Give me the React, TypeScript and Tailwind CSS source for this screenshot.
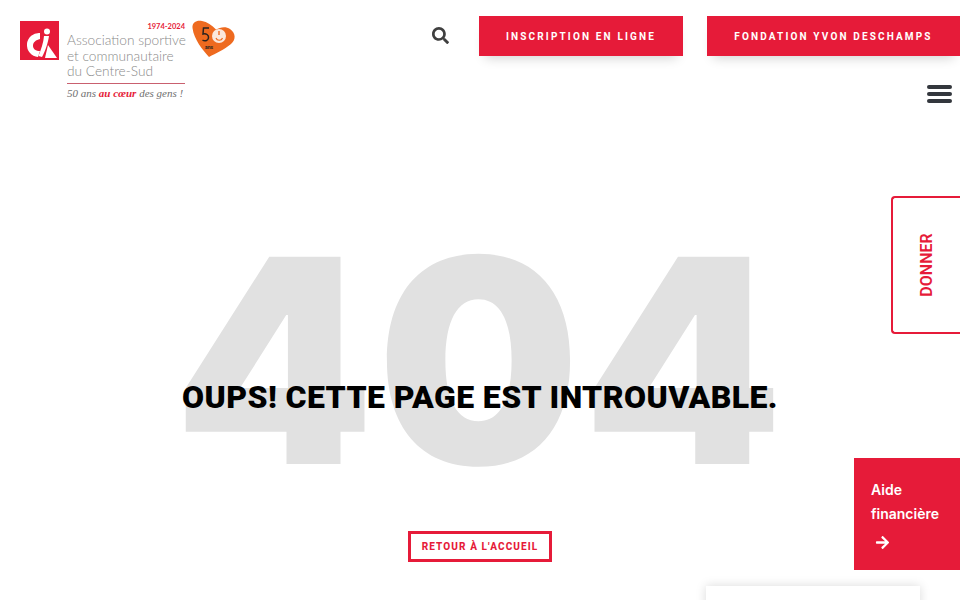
import { FaSearch, FaArrowRight } from "react-icons/fa"

const Logo = () => {
    return (
        <div className="flex items-start gap-2 pt-[21px] pl-5 font-['Lato',sans-serif]">
            <svg width="39" height="39" viewBox="0 0 39 39" className="shrink-0">
                <rect width="39" height="39" fill="#e61b39" />
                <path d="M20 12 A12 12 0 1 0 18 36 L20 30 C16 30 13 28 13 25 C13 21 16 19 20 18 Z" fill="#fff" />
                <circle cx="27" cy="10.5" r="3" fill="#fff" />
                <path d="M24 15 L29 15 C28 22 25 31 22 36 L18.5 35 C21 28 23.5 22 24 15 Z" fill="#fff" />
                <path d="M28 24 L37 37 L25 37 Z" fill="#fff" />
            </svg>
            <div className="w-[118px]">
                <p className="text-right text-[7.5px] leading-[12px] font-bold text-[#e61b39]">1974-2024</p>
                <p className="text-[13.7px] leading-[15.5px] font-light text-[#8a8a8a] whitespace-nowrap -mt-[1px]">
                    Association sportive
                    <br />
                    et communautaire
                    <br />
                    du Centre-Sud
                </p>
                <div className="h-px bg-[#c9606f] mt-[4px]"></div>
                <p className="font-['Liberation_Serif',serif] italic text-[11px] leading-[12px] mt-[3px] text-[#6f6f6f] whitespace-nowrap">
                    50 ans <b className="text-[#e61b39]">au cœur</b> des gens !
                </p>
            </div>
            <svg width="44" height="38" viewBox="0 0 44 38" className="shrink-0 -ml-[1px] -mt-[1px]">
                <path d="M17 37 C11 30 2 20 0.5 8 C0 2 5 0 10 1 C15 2 20 5 24 9.5 C28 7 34 6 38 9 C44 13 44 20 39 24 C32 30 24 33 17 37 Z" fill="#ee6a1f" />
                <path d="M17 8 H11.5 L11 14 C14 13 17 15 16.5 18 C16 21 12.5 21.5 10.5 20" fill="none" stroke="#2a2320" strokeWidth="1.5" />
                <circle cx="27" cy="16" r="7" fill="#fbe8dc" />
                <path d="M24 18 C25 21 29.5 21 30.5 18" fill="none" stroke="#ee6a1f" strokeWidth="1.2" />
                <path d="M27 11 V15" stroke="#ee6a1f" strokeWidth="1.4" />
                <text x="17" y="29" textAnchor="middle" fontSize="5" fontWeight="700" fill="#2a2320" fontFamily="Roboto, sans-serif">ans</text>
            </svg>
        </div>
    )
}

const HeaderButton = ({ label, className }: { label: string; className: string }) => {
    return (
        <a className={`flex h-10 items-center justify-center bg-[#e61b39] text-[10px] font-bold tracking-[2.15px] text-white shadow-[0_8px_12px_-6px_rgba(0,0,0,0.18)] ${className}`}>
            {label}
        </a>
    )
}

const Header = () => {
    return (
        <header className="flex justify-between">
            <Logo />
            <div className="flex flex-col items-end pt-4">
                <div className="flex items-center">
                    <FaSearch className="size-[17px] text-[#3f3f3f] mr-[30px] -mt-[1px]" />
                    <HeaderButton label="INSCRIPTION EN LIGNE" className="w-[204px] mr-6" />
                    <HeaderButton label="FONDATION YVON DESCHAMPS" className="w-[253px]" />
                </div>
                <div className="flex flex-col gap-[3px] w-[25px] mt-[29px] mr-2">
                    <span className="h-[4px] rounded-[2px] bg-[#33373d]"></span>
                    <span className="h-[4px] rounded-[2px] bg-[#33373d]"></span>
                    <span className="h-[4px] rounded-[2px] bg-[#33373d]"></span>
                </div>
            </div>
        </header>
    )
}

export default function App() {
    return (
        <div className="relative h-[600px] w-[960px] overflow-hidden bg-white font-['Roboto',sans-serif]">
            <Header />
            <main className="flex flex-col items-center mt-[127px]">
                <div className="grid place-items-center">
                    <div className="col-start-1 row-start-1 font-['Inter',sans-serif] font-black text-[285px] leading-[256px] tracking-[3px] text-[#e1e1e1] mt-[3px]">
                        404
                    </div>
                    <h1 className="col-start-1 row-start-1 self-end mb-[73px] text-[32px] leading-[38px] font-black tracking-[0.4px] text-black whitespace-nowrap">
                        OUPS! CETTE PAGE EST INTROUVABLE.
                    </h1>
                </div>
                <a className="mt-[42px] flex h-[31px] w-[144px] items-center justify-center border-[3px] border-[#e61b39] text-[10px] font-extrabold tracking-[1.1px] text-[#e61b39]">
                    RETOUR À L'ACCUEIL
                </a>
            </main>

            <a className="absolute right-0 top-[196px] flex h-[138px] w-[69px] items-center justify-center rounded-l-[4px] border-2 border-r-0 border-[#e61b39] bg-white">
                <span className="-rotate-90 text-[16px] font-semibold text-[#e61b39]">DONNER</span>
            </a>

            <a className="absolute right-0 top-[458px] h-[112px] w-[106px] bg-[#e61b39] pl-[17px] pt-5 text-[14px] leading-6 font-semibold text-white font-['Inter',sans-serif]">
                Aide
                <br />
                financière
                <FaArrowRight className="size-[15px] ml-1 mt-[9px]" />
            </a>

            <div className="absolute left-[706px] top-[586px] h-10 w-[214px] bg-white shadow-[0_0_10px_rgba(0,0,0,0.15)]"></div>
        </div>
    )
}
